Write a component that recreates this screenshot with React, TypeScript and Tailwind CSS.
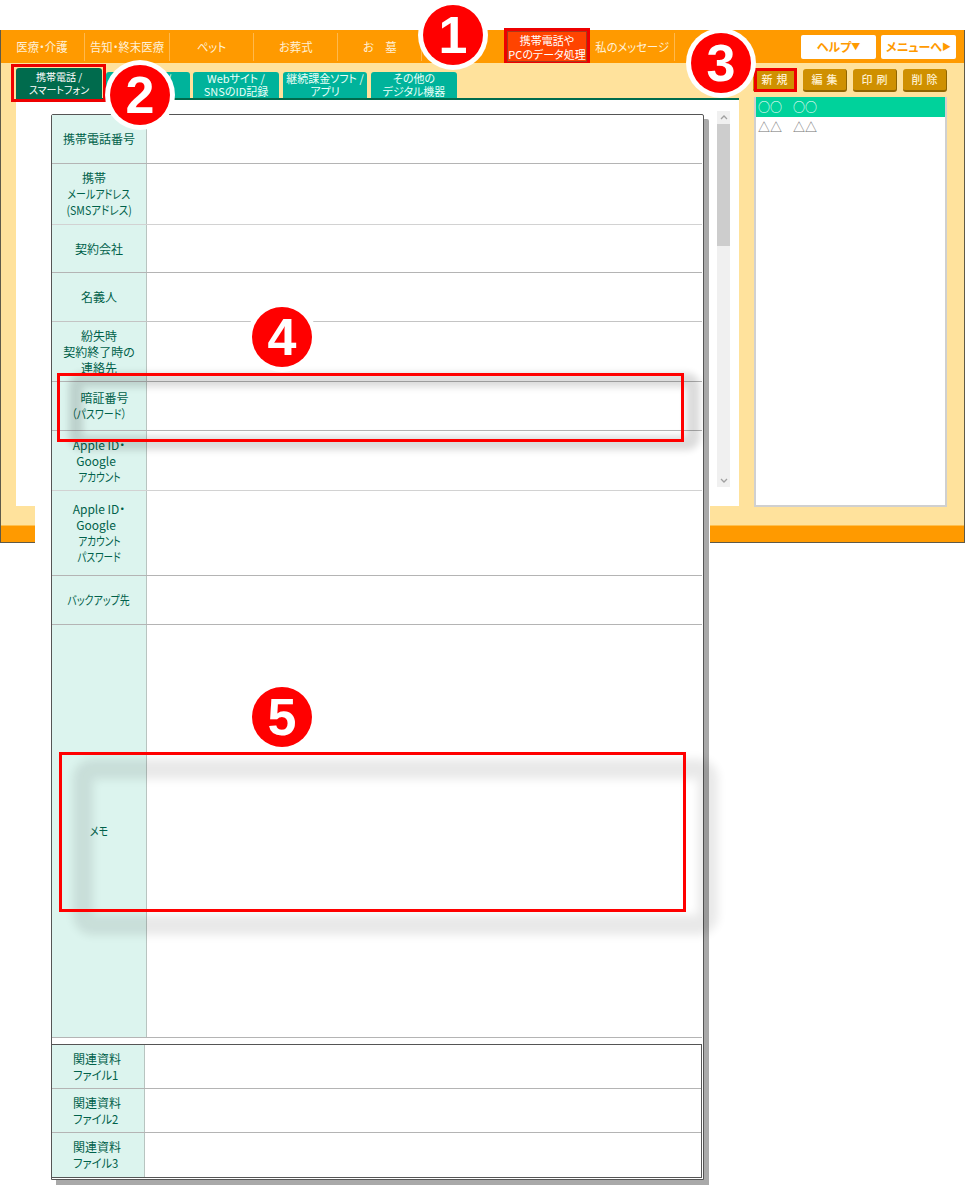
import React from "react";

const navItems = [
  { label: "医療・介護", w: "w-[84px]" },
  { label: "告知・終末医療", w: "w-[85px]" },
  { label: "ペット", w: "w-[84px]" },
  { label: "お葬式", w: "w-[84px]" },
  { label: "お　墓", w: "w-[84px]" },
];

const tabs = [
  { lines: ["パソコン /", "タブレット"], w: "w-[84px]" },
  { lines: ["Webサイト /", "SNSのID記録"], w: "ml-[3px] w-[86px]" },
  { lines: ["継続課金ソフト /", "アプリ"], w: "ml-[4px] w-[84px]" },
  { lines: ["その他の", "デジタル機器"], w: "ml-[4px] w-[86px]" },
];

type Line = { t: string; c?: string };

const narrow83 = "inline-block scale-x-[0.83]";
const narrow80 = "inline-block scale-x-[0.8]";

const rows: { id: string; lines: Line[]; h: string; line: string }[] = [
  { id: "tel", lines: [{ t: "携帯電話番号" }], h: "h-[49px]", line: "border-[#b4b4b4]" },
  {
    id: "mail",
    lines: [
      { t: "携帯", c: "pr-[10px]" },
      { t: "メールアドレス", c: narrow83 },
      { t: "(SMSアドレス)", c: "inline-block scale-x-[0.88]" },
    ],
    h: "h-[61px]",
    line: "border-[#d2d2d2]",
  },
  { id: "co", lines: [{ t: "契約会社" }], h: "h-[48px]", line: "border-[#b4b4b4]" },
  { id: "name", lines: [{ t: "名義人" }], h: "h-[49px]", line: "border-[#c4c4c4]" },
  {
    id: "lost",
    lines: [{ t: "紛失時" }, { t: "契約終了時の" }, { t: "連絡先" }],
    h: "h-[60px]",
    line: "border-[#b4b4b4]",
  },
  {
    id: "pin",
    lines: [
      { t: "暗証番号", c: "pl-[11px]" },
      { t: "（パスワード）", c: narrow83 },
    ],
    h: "h-[49px]",
    line: "border-[#b4b4b4]",
  },
  {
    id: "apple",
    lines: [{ t: "Apple ID・" }, { t: "Google", c: "pr-[6px]" }, { t: "アカウント", c: narrow80 }],
    h: "h-[60px]",
    line: "border-[#d2d2d2]",
  },
  {
    id: "applepw",
    lines: [
      { t: "Apple ID・" },
      { t: "Google", c: "pr-[6px]" },
      { t: "アカウント", c: narrow80 },
      { t: "パスワード", c: narrow80 },
    ],
    h: "h-[85px]",
    line: "border-[#b4b4b4]",
  },
  { id: "backup", lines: [{ t: "バックアップ先", c: narrow83 }], h: "h-[49px]", line: "border-[#b4b4b4]" },
  { id: "memo", lines: [{ t: "メモ", c: narrow83 }], h: "h-[413px]", line: "border-[#b4b4b4]" },
];

const files = ["ファイル1", "ファイル2", "ファイル3"];

function Badge({ n, pos }: { n: number; pos: string }) {
  return (
    <div
      className={`absolute z-20 ${pos} flex h-[60px] w-[60px] items-center justify-center rounded-full bg-[#ff0000] font-['Liberation_Sans',sans-serif] text-[52px] leading-none font-bold text-white shadow-[0_0_0_5px_#ffffff]`}
    >
      {n}
    </div>
  );
}

function ActionButton({ label, selected }: { label: string; selected?: boolean }) {
  return (
    <div className="relative flex h-[23px] w-[44px] items-center justify-center rounded-[3px] border-b-2 border-r border-[#8f6400] bg-[#cf9000] pl-[4px] text-[11px] font-medium tracking-[4px] text-[#fff0cf]">
      {label}
      {selected && (
        <span className="absolute -bottom-[2px] left-[1px] -right-[1px] -top-[1px] border-[3px] border-[#ee0000]" />
      )}
    </div>
  );
}

export default function App() {
  return (
    <div className="relative h-[1199px] w-[965px] overflow-hidden bg-white font-['Noto_Sans_CJK_JP',sans-serif] [font-feature-settings:'palt']">
      <div className="h-[30px]" />

      {/* application window */}
      <div className="flex h-[513px] flex-col border-x border-b border-[#5f5a48]">
        {/* top nav */}
        <div className="flex h-[33px] items-center bg-[#ff9a00] text-[12px] text-[#fff0d6]">
          {navItems.map((item) => (
            <div
              key={item.label}
              className={`flex h-[28px] ${item.w} items-center justify-center border-r border-[#ffb94d] whitespace-nowrap`}
            >
              <span className="inline-block scale-x-[0.95]">{item.label}</span>
            </div>
          ))}
          <div className="w-[82px]" />
          <div className="mx-[3px] flex h-[31px] w-[80px] flex-col items-center justify-center bg-[#ff4400] text-center text-[11px] leading-[14px] text-white shadow-[inset_0_0_0_1px_#a83a1c] outline-[3px] outline-[#ee0000]">
            <span className="whitespace-nowrap">携帯電話や</span>
            <span className="whitespace-nowrap">PCのデータ処理</span>
          </div>
          <div className="flex h-[28px] w-[85px] items-center justify-center border-r border-[#ffb94d] whitespace-nowrap">
            <span className="inline-block scale-x-[0.94]">私のメッセージ</span>
          </div>
          <div className="flex-1" />
          <div className="flex h-[24px] w-[75px] items-center justify-center rounded-[2px] bg-white text-[12px] font-bold text-[#ff9a00]">
            ヘルプ<span className="text-[9px]">▼</span>
          </div>
          <div className="ml-[5px] mr-[8px] flex h-[24px] w-[75px] items-center justify-center rounded-[2px] bg-white text-[12px] font-bold text-[#ff9a00]">
            メニューへ<span className="text-[9px]">▶</span>
          </div>
        </div>

        {/* body */}
        <div className="flex flex-1 bg-[#ffe29c] pl-[15px]">
          <div className="flex w-[723px] flex-col">
            <div className="flex h-[37px] items-end border-b-2 border-[#006b4d]">
              <div className="relative flex h-[30px] w-[86px] flex-col items-center justify-center rounded-t-[3px] bg-[#006b4d] text-center text-[10px] leading-[13px] text-white">
                <span>携帯電話 /</span>
                <span>スマートフォン</span>
                <span className="absolute -bottom-[4px] -left-[5px] -right-[4px] -top-[4px] z-10 border-[3px] border-[#ee0000]" />
              </div>
              <div className="ml-[4px] flex">
                {tabs.map((tab) => (
                  <div
                    key={tab.lines[0]}
                    className={`flex h-[26px] ${tab.w} flex-col items-center justify-center rounded-t-[3px] bg-[#00b39b] text-center text-[11px] leading-[13px] text-[#eafff8]`}
                  >
                    {tab.lines.map((l) => (
                      <span key={l} className="whitespace-nowrap">
                        {l}
                      </span>
                    ))}
                  </div>
                ))}
              </div>
            </div>
            <div className="flex h-[406px] justify-end bg-white pr-[9px] pt-[11px]">
              {/* scrollbar */}
              <div className="flex h-[376px] w-[13px] flex-col bg-[#f0f0f0]">
                <div className="flex h-[13px] items-center justify-center">
                  <svg width="8" height="5" viewBox="0 0 8 5" fill="none" stroke="#a0a0a0" strokeWidth="1.3">
                    <path d="M1 4 L4 1 L7 4" />
                  </svg>
                </div>
                <div className="h-[122px] bg-[#cdcdcd]" />
                <div className="flex-1" />
                <div className="flex h-[13px] items-center justify-center">
                  <svg width="8" height="5" viewBox="0 0 8 5" fill="none" stroke="#a0a0a0" strokeWidth="1.3">
                    <path d="M1 1 L4 4 L7 1" />
                  </svg>
                </div>
              </div>
            </div>
          </div>

          {/* right column */}
          <div className="ml-[15px] flex w-[193px] flex-col">
            <div className="h-[34px] pt-[6px]">
              <div className="-ml-[1px] flex gap-[6px]">
                <ActionButton label="新規" selected />
                <ActionButton label="編集" />
                <ActionButton label="印刷" />
                <ActionButton label="削除" />
              </div>
            </div>
            <div className="h-[410px] border-2 border-t-0 border-[#d0d0d0] bg-white">
              <div className="flex h-[20px] items-center gap-[11px] bg-[#00d29b] pl-[2px] text-[12px] text-white">
                <span>○○</span>
                <span>○○</span>
              </div>
              <div className="flex h-[19px] items-center gap-[11px] pl-[2px] text-[12px] text-[#707070]">
                <span>△△</span>
                <span>△△</span>
              </div>
            </div>
          </div>
        </div>

        {/* footer */}
        <div className="h-[17px] border-t border-[#ffc04d] bg-[#ff9a00]" />
      </div>

      {/* overlaid form panel */}
      <div className="absolute left-[35px] top-[100px] bottom-0 w-[675px] bg-white pl-[16px] pt-[14px]">
        <div className="w-[653px] rounded-t-[2px] border border-[#555555] bg-white pr-[1px] text-[12px] leading-[16px] text-[#00614a] shadow-[5px_5px_0_#a9a9a9]">
          {rows.map((row) => (
            <div key={row.id} className={`flex ${row.h} border-b ${row.line}`}>
              <div className="flex w-[95px] flex-col items-center justify-center border-r border-[#b8c4c0] bg-[#dcf4ee] text-center">
                {row.lines.map((l) => (
                  <span key={l.t} className={`whitespace-nowrap ${l.c ?? ""}`}>
                    {l.t}
                  </span>
                ))}
              </div>
            </div>
          ))}
          <div className="h-[6px]" />
          <div className="border-y border-r border-y-[#555555] border-r-[#555555]">
            {files.map((f, i) => (
              <div key={f} className={`flex h-[44px] ${i < 2 ? "border-b border-[#b4b4b4]" : ""}`}>
                <div className="flex w-[93px] flex-col justify-center border-r border-[#b8c4c0] bg-[#dcf4ee] pl-[21px]">
                  <span>関連資料</span>
                  <span className="origin-left scale-x-[0.94]">{f}</span>
                </div>
              </div>
            ))}
          </div>
          <div className="h-[1px]" />
        </div>
      </div>

      {/* blurred highlight glows */}
      <div className="absolute left-[76px] top-[380px] h-[63px] w-[617px] rounded-[6px] shadow-[0_0_7px_7px_rgba(0,0,0,0.14),inset_0_0_7px_7px_rgba(0,0,0,0.14)]" />
      <div className="absolute left-[83px] top-[769px] h-[156px] w-[625px] rounded-[10px] shadow-[0_0_10px_10px_rgba(0,0,0,0.09),inset_0_0_10px_10px_rgba(0,0,0,0.09)]" />

      {/* red annotation frames */}
      <div className="absolute left-[57px] top-[373px] h-[69px] w-[627px] border-[3px] border-[#ff0000]" />
      <div className="absolute left-[59px] top-[752px] h-[160px] w-[627px] border-[3px] border-[#ff0000]" />

      {/* numbered badges */}
      <Badge n={1} pos="left-[423px] top-[5px]" />
      <Badge n={2} pos="left-[110px] top-[65px]" />
      <Badge n={3} pos="left-[691px] top-[33px]" />
      <Badge n={4} pos="left-[252px] top-[307px]" />
      <Badge n={5} pos="left-[252px] top-[687px]" />
    </div>
  );
}
